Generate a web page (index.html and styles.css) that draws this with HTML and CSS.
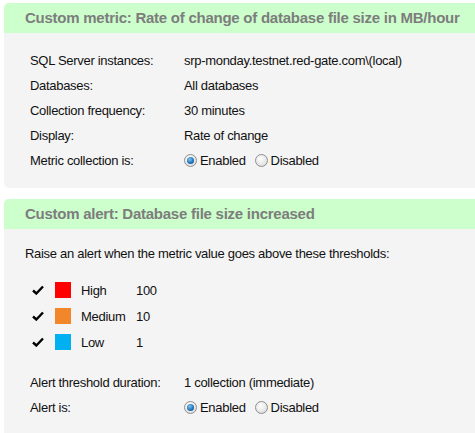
FILE: index.html
```html
<!DOCTYPE html>
<html>
<head>
<meta charset="utf-8">
<link rel="stylesheet" href="styles.css">
</head>
<body>
<div class="page">
  <section class="panel">
    <h2 class="panel-head">Custom metric: Rate of change of database file size in MB/hour</h2>
    <div class="panel-body metric-body">
      <div class="row"><span class="label">SQL Server instances:</span><span class="value">srp-monday.testnet.red-gate.com\(local)</span></div>
      <div class="row"><span class="label">Databases:</span><span class="value">All databases</span></div>
      <div class="row"><span class="label">Collection frequency:</span><span class="value">30 minutes</span></div>
      <div class="row"><span class="label">Display:</span><span class="value">Rate of change</span></div>
      <div class="row"><span class="label">Metric collection is:</span>
        <span class="value radios">
          <span class="radio on"></span><span class="rtext">Enabled</span>
          <span class="radio"></span><span class="rtext">Disabled</span>
        </span>
      </div>
    </div>
  </section>

  <section class="panel">
    <h2 class="panel-head">Custom alert: Database file size increased</h2>
    <div class="panel-body alert-body">
      <p class="intro">Raise an alert when the metric value goes above these thresholds:</p>
      <div class="thresholds">
        <div class="trow">
          <svg class="check" viewBox="0 0 12 10" width="12" height="10"><path d="M1 5.5 L4.3 8.5 L11 1.5" fill="none" stroke="#000" stroke-width="2.4" stroke-linejoin="miter"/></svg>
          <span class="swatch high"></span><span class="tname">High</span><span class="tval">100</span>
        </div>
        <div class="trow">
          <svg class="check" viewBox="0 0 12 10" width="12" height="10"><path d="M1 5.5 L4.3 8.5 L11 1.5" fill="none" stroke="#000" stroke-width="2.4" stroke-linejoin="miter"/></svg>
          <span class="swatch medium"></span><span class="tname">Medium</span><span class="tval">10</span>
        </div>
        <div class="trow">
          <svg class="check" viewBox="0 0 12 10" width="12" height="10"><path d="M1 5.5 L4.3 8.5 L11 1.5" fill="none" stroke="#000" stroke-width="2.4" stroke-linejoin="miter"/></svg>
          <span class="swatch low"></span><span class="tname">Low</span><span class="tval">1</span>
        </div>
      </div>
      <div class="rows2">
        <div class="row"><span class="label">Alert threshold duration:</span><span class="value">1 collection (immediate)</span></div>
        <div class="row"><span class="label">Alert is:</span>
          <span class="value radios">
            <span class="radio on"></span><span class="rtext">Enabled</span>
            <span class="radio"></span><span class="rtext">Disabled</span>
          </span>
        </div>
      </div>
    </div>
  </section>
</div>
</body>
</html>
```

FILE: styles.css
```css
html, body {
  margin: 0;
  padding: 0;
  background: #ffffff;
  overflow: hidden;
}
body {
  font-family: "Liberation Sans", Arial, sans-serif;
  font-size: 13px;
  letter-spacing: -0.3px;
  color: #111111;
}
.page {
  padding: 3px 0 0 4px;
  width: 490px;
  display: flex;
  flex-direction: column;
  gap: 11px;
}
.panel {
  background: #f4f4f4;
  border-radius: 5px;
  overflow: hidden;
}
.panel-head {
  margin: 0;
  height: 30px;
  line-height: 30px;
  background: #ccffcc;
  color: #7d7d7d;
  font-size: 15px;
  letter-spacing: -0.25px;
  font-weight: bold;
  padding-left: 21px;
  white-space: nowrap;
}
.metric-body {
  padding: 15px 0 15px 26px;
}
.row {
  display: flex;
  align-items: center;
  height: 25px;
  white-space: nowrap;
}
.label {
  width: 154px;
}
.radios {
  display: flex;
  align-items: center;
}
.radio {
  width: 11px;
  height: 11px;
  border-radius: 50%;
  border: 1px solid #8e8f8f;
  background: radial-gradient(circle at 40% 35%, #ffffff 0%, #e2e2e2 70%, #cfcfcf 100%);
  box-sizing: content-box;
  position: relative;
  margin-right: 3px;
}
.radio.on::after {
  content: "";
  position: absolute;
  left: 2px;
  top: 2px;
  width: 7px;
  height: 7px;
  border-radius: 50%;
  background: radial-gradient(circle at 40% 35%, #7fc4f0 0%, #1c6fb3 60%, #0d4c86 100%);
}
.rtext {
  margin-right: 9px;
}
.alert-body {
  padding: 17px 0 20px 21px;
}
.intro {
  margin: 0;
  height: 15px;
  line-height: 15px;
}
.thresholds {
  padding: 21px 0 0 7px;
  display: flex;
  flex-direction: column;
  gap: 10px;
}
.trow {
  display: flex;
  align-items: center;
  height: 16px;
}
.check {
  margin-right: 11px;
}
.swatch {
  width: 16px;
  height: 16px;
  margin-right: 10px;
}
.swatch.high { background: #ff0000; }
.swatch.medium { background: #f2862a; }
.swatch.low { background: #00b0f0; }
.tname {
  width: 55px;
}
.rows2 {
  padding: 20px 0 0 5px;
}
.rows2 .label {
  width: 154px;
}
```
